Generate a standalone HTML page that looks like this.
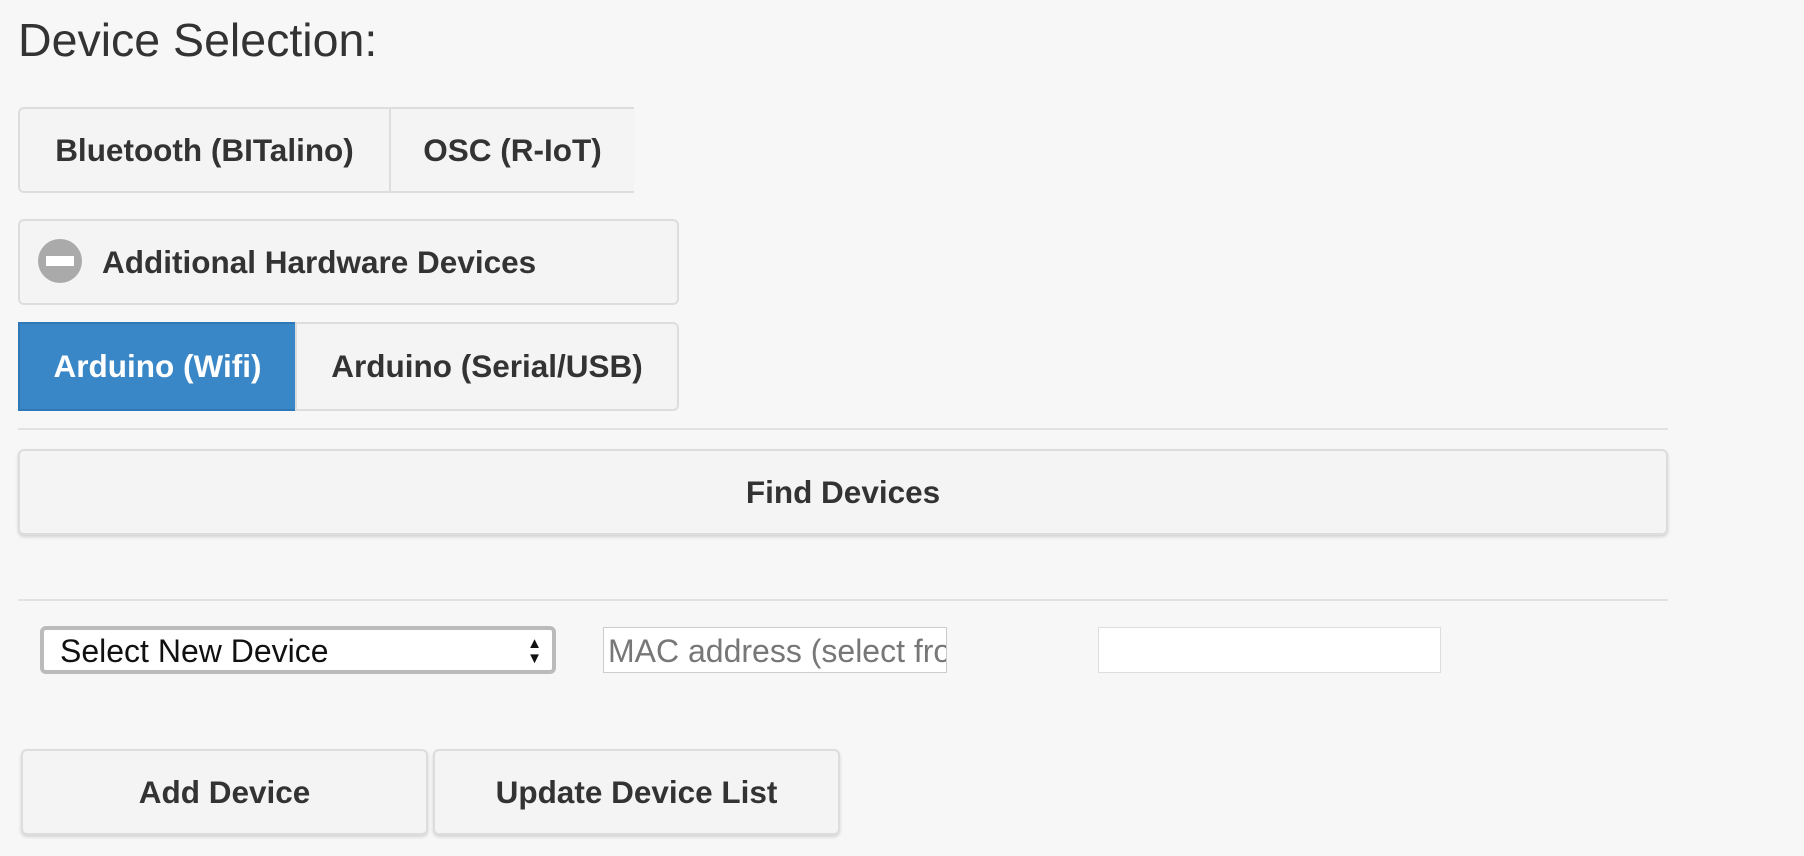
<!DOCTYPE html>
<html><head><style>
body{margin:0;width:1804px;height:856px;background:#f7f7f7;font-family:"Liberation Sans",sans-serif;color:#333;position:relative;overflow:hidden}
.a{position:absolute;box-sizing:border-box}
h1{position:absolute;left:18px;top:13px;margin:0;font-weight:normal;font-size:46.5px;color:#333}
.btn{position:absolute;box-sizing:border-box;background:#f4f4f4;border:2px solid #ddd;font-weight:bold;font-size:31.5px;display:flex;align-items:center;justify-content:center;color:#333;white-space:nowrap}
.hr{position:absolute;left:18px;width:1650px;height:2px;background:#e2e2e2}
</style></head><body>
<h1>Device Selection:</h1>
<div class="btn" style="left:18px;top:107px;width:373px;height:86px;border-radius:6px 0 0 6px">Bluetooth (BITalino)</div>
<div class="btn" style="left:389px;top:107px;width:245px;height:86px;border-left:2px solid #ddd;border-right:none">OSC (R-IoT)</div>
<div class="btn" style="left:18px;top:219px;width:661px;height:86px;border-radius:6px;justify-content:flex-start;padding-left:82px">Additional Hardware Devices</div>
<div class="a" style="left:38px;top:239px;width:44px;height:44px;border-radius:50%;background:#aaa"><div class="a" style="left:8px;top:17px;width:28px;height:10px;background:#fff"></div></div>
<div class="btn" style="left:18px;top:322px;width:279px;height:89px;background:#3a87c8;border-color:#2e78b8;color:#fff">Arduino (Wifi)</div>
<div class="btn" style="left:295px;top:322px;width:384px;height:89px;border-radius:0 6px 6px 0">Arduino (Serial/USB)</div>
<div class="hr" style="top:428px"></div>
<div class="btn" style="left:18px;top:449px;width:1650px;height:86px;border-radius:6px;box-shadow:0 2px 3px rgba(0,0,0,.15)">Find Devices</div>
<div class="hr" style="top:599px"></div>
<div class="a" style="left:40px;top:626px;width:516px;height:48px;border:4px solid #bbb;border-radius:6px;background:#fff;font-size:32px;color:#111;padding:3px 0 0 16px;white-space:nowrap">Select New Device<span style="position:absolute;right:10px;top:6px;font-size:15px;line-height:15px">▲<br>▼</span></div>
<div class="a" style="left:603px;top:627px;width:344px;height:46px;border:1px solid #ccc;background:#fff;font-size:32px;color:#777;padding:5px 0 0 4px;overflow:hidden;white-space:nowrap">MAC address (select fro</div>
<div class="a" style="left:1098px;top:627px;width:343px;height:46px;border:1px solid #ddd;background:#fff"></div>
<div class="btn" style="left:21px;top:749px;width:407px;height:86px;border-radius:6px;box-shadow:0 2px 3px rgba(0,0,0,.15)">Add Device</div>
<div class="btn" style="left:433px;top:749px;width:407px;height:86px;border-radius:6px;box-shadow:0 2px 3px rgba(0,0,0,.15)">Update Device List</div>
</body></html>
